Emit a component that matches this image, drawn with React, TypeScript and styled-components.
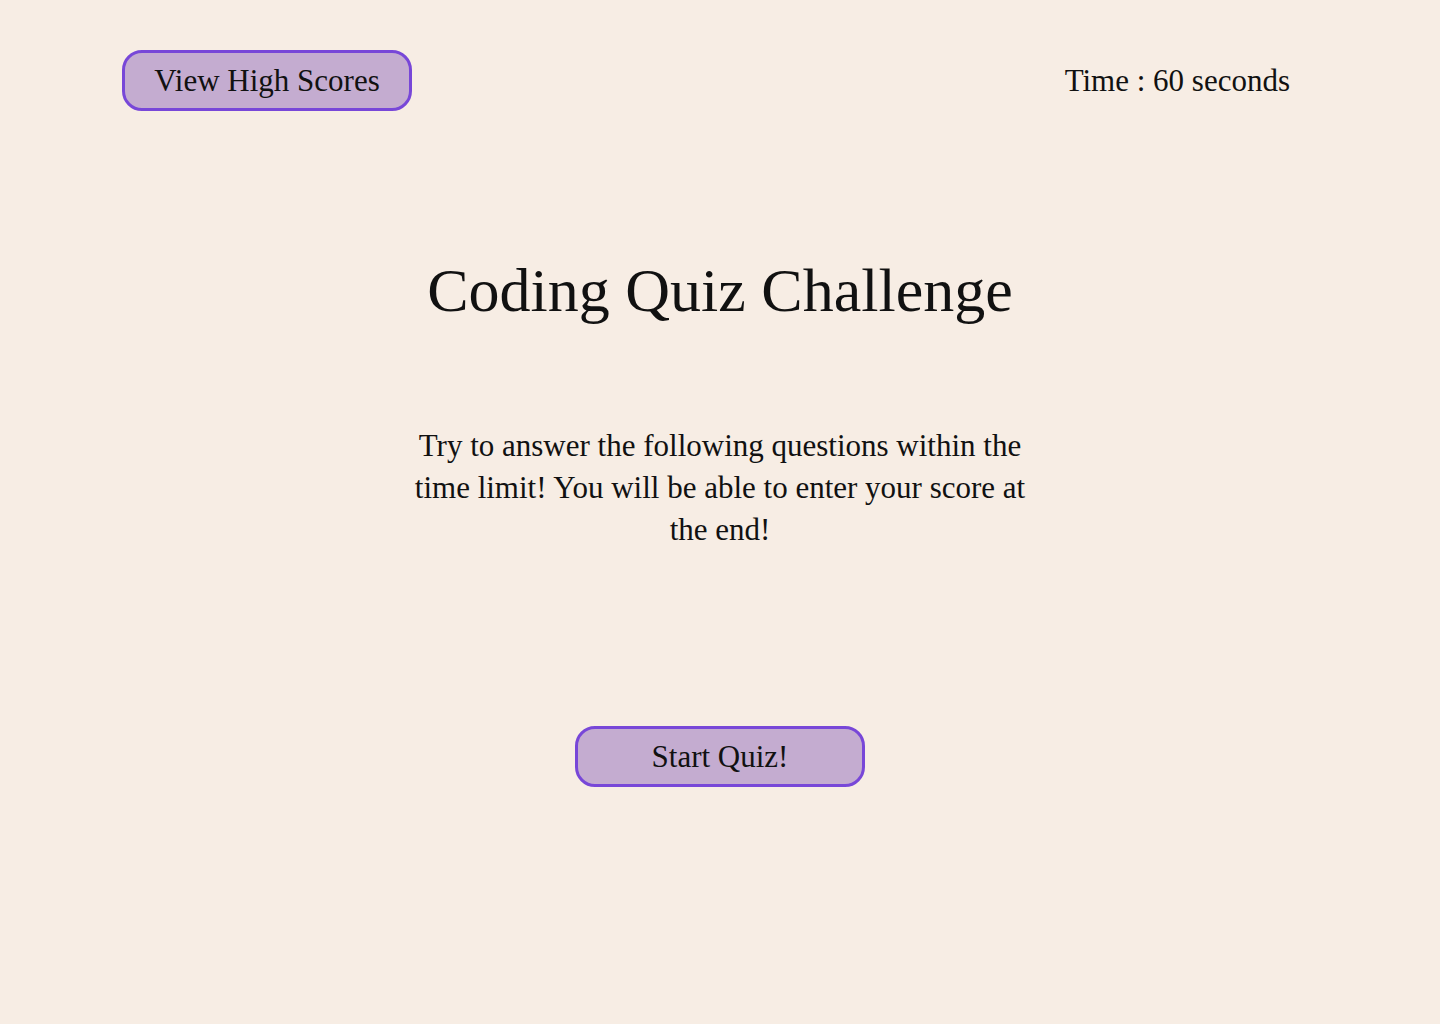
import React from "react";
import styled, { createGlobalStyle } from "styled-components";

const Global = createGlobalStyle`
  html, body { margin: 0; padding: 0; background: #f7ede4; }
  body { font-family: "Liberation Serif", "DejaVu Serif", serif; color: #111; }
`;

const Page = styled.div`
  min-height: 1024px;
  background: #f7ede4;
  display: flex;
  flex-direction: column;
`;

const Header = styled.header`
  display: flex;
  justify-content: space-between;
  align-items: center;
  padding: 50px 150px 0 122px;
`;

const PillButton = styled.button`
  width: 290px;
  height: 61px;
  box-sizing: border-box;
  background: #c4acd0;
  border: 3px solid #7847d8;
  border-radius: 20px;
  font-family: "Liberation Serif", "DejaVu Serif", serif;
  font-size: 31px;
  color: #111;
  cursor: pointer;
  padding: 0;
`;

const Timer = styled.div`
  font-size: 31px;
`;

const Main = styled.main`
  display: flex;
  flex-direction: column;
  align-items: center;
`;

const Title = styled.h1`
  margin: 139px 0 0;
  font-weight: 400;
  font-size: 62px;
  line-height: 80px;
`;

const Intro = styled.p`
  margin: 95px 0 0;
  width: 624px;
  text-align: center;
  font-size: 31px;
  line-height: 42px;
`;

const StartWrap = styled.div`
  margin-top: 175px;
`;

export default function App() {
  return (
    <Page>
      <Global />
      <Header>
        <PillButton>View High Scores</PillButton>
        <Timer>Time : 60 seconds</Timer>
      </Header>
      <Main>
        <Title>Coding Quiz Challenge</Title>
        <Intro>
          Try to answer the following questions within the time limit! You will be able to enter your score at the end!
        </Intro>
        <StartWrap>
          <PillButton>Start Quiz!</PillButton>
        </StartWrap>
      </Main>
    </Page>
  );
}
